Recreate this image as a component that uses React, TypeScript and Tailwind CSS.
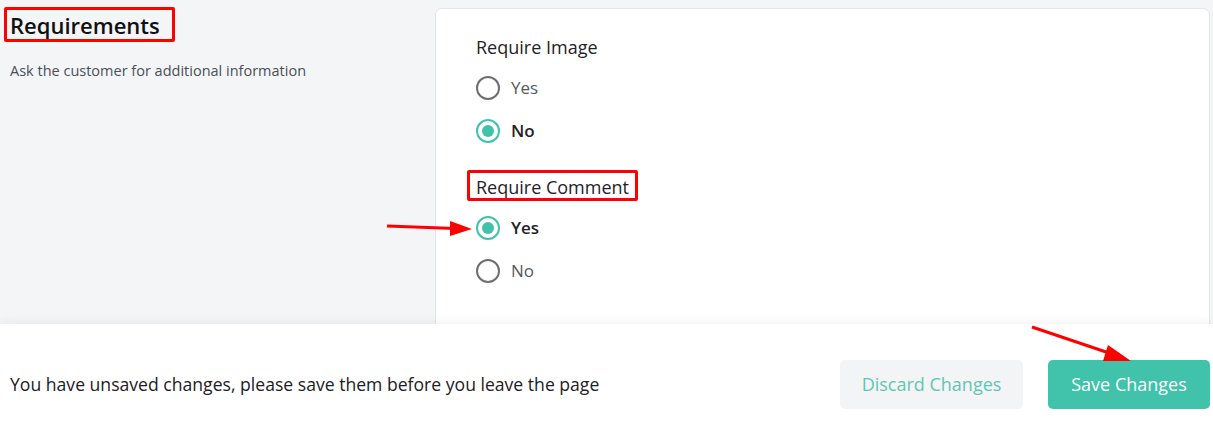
import React from "react";

function Radio({ checked, label }: { checked: boolean; label: string }) {
  return (
    <div className="flex items-center h-6">
      {checked ? (
        <span className="w-6 h-6 rounded-full border-2 border-[#40c2ab] flex items-center justify-center">
          <span className="w-3 h-3 rounded-full bg-[#40c2ab]" />
        </span>
      ) : (
        <span className="w-6 h-6 rounded-full border-2 border-[#6e6e6e]" />
      )}
      <span
        className={
          checked
            ? "ml-[11px] text-[17px] leading-6 font-semibold text-[#1f2328]"
            : "ml-[11px] text-[17px] leading-6 text-[#555a60]"
        }
      >
        {label}
      </span>
    </div>
  );
}

export default function App() {
  return (
    <div
      className="w-[1213px] h-[445px] bg-white overflow-hidden relative"
      style={{ fontFamily: "'Open Sans', Lato, sans-serif" }}
    >
      <div className="h-[324px] bg-[#f4f5f7] flex overflow-hidden">
        <div className="w-[435px] pl-[10px] pt-[11px]">
          <div className="relative inline-block">
            <h1 className="text-[22px] leading-7 font-semibold text-[#111]">Requirements</h1>
            <span className="absolute -top-[4px] -left-[6px] -right-[15px] -bottom-[3px] border-[3px] border-[#f00] rounded-[2px]" />
          </div>
          <p className="mt-[20px] text-[14.5px] text-[#4a4f57]">Ask the customer for additional information</p>
        </div>
        <div className="flex-1 mr-[3px] mt-2 h-[340px] bg-white border border-[#e3e5e9] rounded-[7px] px-10 pt-[26px]">
          <div className="text-[18px] leading-6 text-[#1f2328]">Require Image</div>
          <div className="mt-[17px] flex flex-col gap-[19px]">
            <Radio checked={false} label="Yes" />
            <Radio checked={true} label="No" />
          </div>
          <div className="mt-8 relative w-fit">
            <div className="text-[18px] leading-6 text-[#1f2328]">Require Comment</div>
            <span className="absolute -top-[5px] -left-[9px] -right-[9px] -bottom-[2px] border-[3px] border-[#f00] rounded-[2px]" />
          </div>
          <div className="mt-[17px] flex flex-col gap-[19px]">
            <Radio checked={true} label="Yes" />
            <Radio checked={false} label="No" />
          </div>
        </div>
      </div>
      <div className="h-[121px] bg-white flex items-center shadow-[0_-4px_8px_rgba(0,0,0,0.04)] relative">
        <div className="pl-[10px] text-[17.6px] text-[#1d2026] flex-1">
          You have unsaved changes, please save them before you leave the page
        </div>
        <div className="flex gap-[25px] mr-[3px]">
          <button className="w-[183px] h-[49px] rounded-[5px] bg-[#f3f4f6] text-[18px] text-[#5fc6b3]">
            Discard Changes
          </button>
          <button className="w-[162px] h-[49px] rounded-[5px] bg-[#40c2ab] text-[18px] text-white">
            Save Changes
          </button>
        </div>
      </div>
      <svg className="absolute left-0 top-0 pointer-events-none" width="1213" height="445">
        <line x1="387" y1="226" x2="455" y2="228.5" stroke="#f00" strokeWidth="3" />
        <polygon points="472,229 450,221 450,236" fill="#f00" />
        <line x1="1032" y1="327" x2="1112" y2="354" stroke="#f00" strokeWidth="3" />
        <polygon points="1131,361 1108,345 1103,361" fill="#f00" />
      </svg>
    </div>
  );
}
